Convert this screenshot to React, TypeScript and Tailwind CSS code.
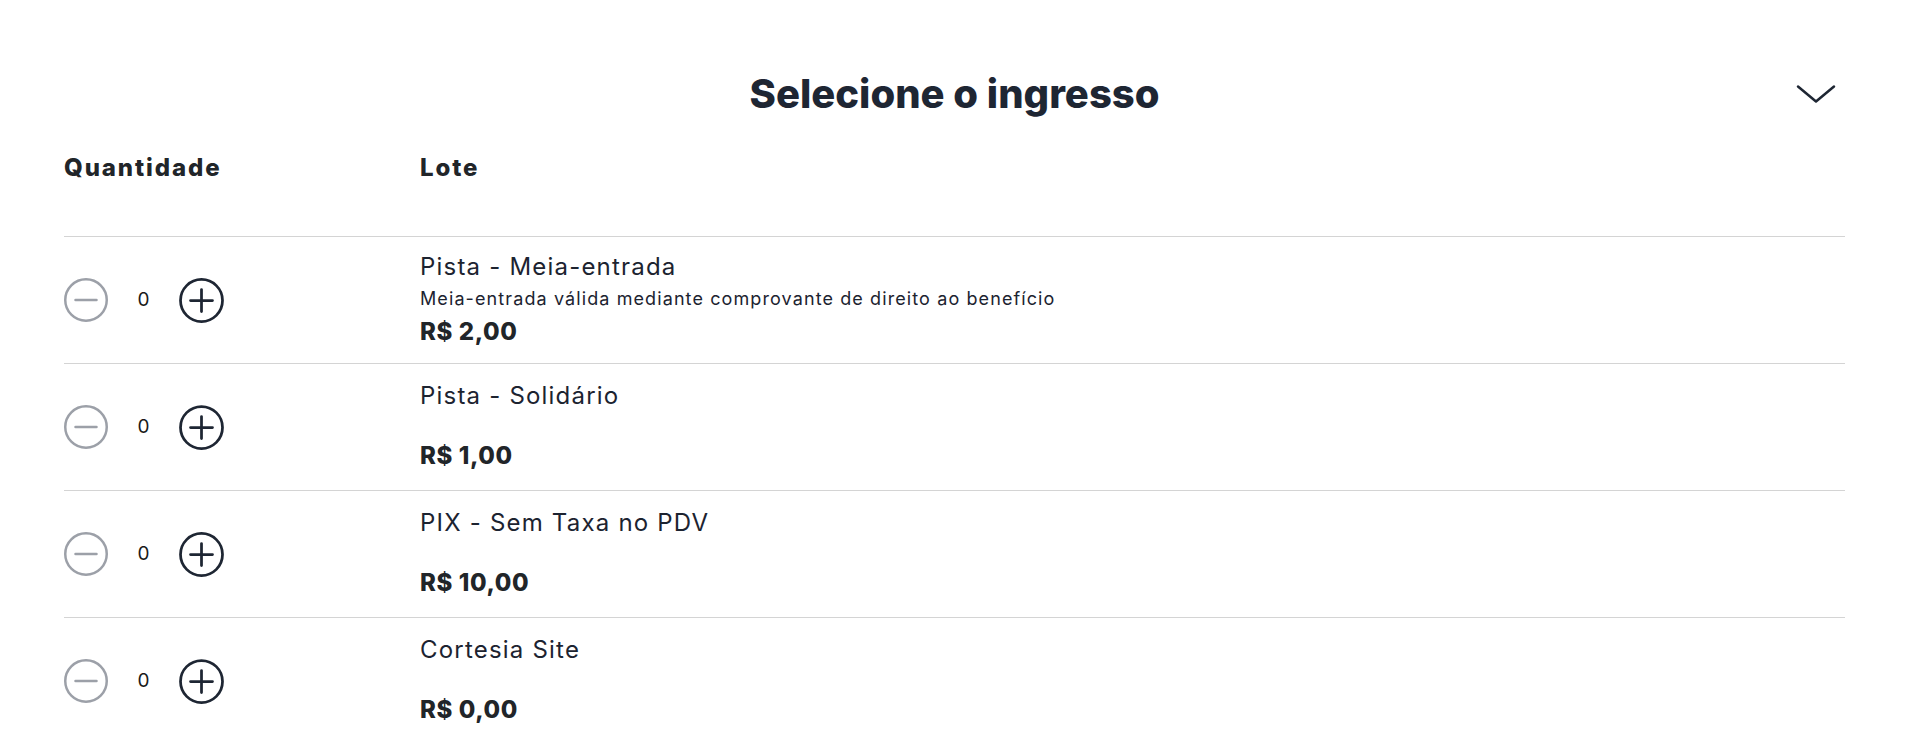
import { useState } from 'react';

type Ticket = {
  id: number;
  name: string;
  description?: string;
  price: string;
};

const tickets: Ticket[] = [
  {
    id: 1,
    name: 'Pista - Meia-entrada',
    description: 'Meia-entrada válida mediante comprovante de direito ao benefício',
    price: 'R$ 2,00',
  },
  { id: 2, name: 'Pista - Solidário', price: 'R$ 1,00' },
  { id: 3, name: 'PIX - Sem Taxa no PDV', price: 'R$ 10,00' },
  { id: 4, name: 'Cortesia Site', price: 'R$ 0,00' },
];

const MinusIcon = ({ active }: { active: boolean }) => (
  <svg width="44" height="44" viewBox="0 0 44 44" fill="none">
    <circle cx="22" cy="22" r="20.75" stroke={active ? '#1e2633' : '#9ca0a8'} strokeWidth="2.5" />
    <path d="M11.5 22h21" stroke={active ? '#1e2633' : '#9ca0a8'} strokeWidth="2.5" strokeLinecap="round" />
  </svg>
);

const PlusIcon = () => (
  <svg width="45" height="45" viewBox="0 0 45 45" fill="none">
    <circle cx="22.5" cy="22.5" r="21" stroke="#1e2633" strokeWidth="2.75" />
    <path d="M11.5 22.5h22M22.5 11.5v22" stroke="#1e2633" strokeWidth="2.75" strokeLinecap="round" />
  </svg>
);

const TicketRow = ({ ticket }: { ticket: Ticket }) => {
  const [qty, setQty] = useState(0);

  return (
    <div className="grid grid-cols-[356px_1fr] h-[127px] border-t border-[#d4d4d4]">
      <div className="flex items-center">
        <button
          className="cursor-pointer"
          onClick={() => setQty(Math.max(0, qty - 1))}
          aria-label="Diminuir"
        >
          <MinusIcon active={qty > 0} />
        </button>
        <span className="w-[71px] text-center text-[19px] text-[#1a1a1a]">{qty}</span>
        <button className="cursor-pointer" onClick={() => setQty(qty + 1)} aria-label="Aumentar">
          <PlusIcon />
        </button>
      </div>

      <div className="flex flex-col justify-center pb-0.5">
        <p className="text-[24px] leading-8 tracking-[1.2px] text-[#1c2330]">{ticket.name}</p>
        {ticket.description ? (
          <p className="mt-1 text-[18px] leading-6 tracking-[1.1px] text-[#1c2330]">{ticket.description}</p>
        ) : (
          <div className="h-[23px]" />
        )}
        <p className="mt-[5px] text-[24px] leading-8 font-extrabold tracking-[0.6px] text-[#212529]">
          {ticket.price}
        </p>
      </div>
    </div>
  );
};

const App = () => {
  const [open, setOpen] = useState(true);

  return (
    <div className="min-h-screen bg-white" style={{ fontFamily: 'Inter, "Noto Sans", sans-serif' }}>
      <div className="pl-16 pr-[75px] pt-[70px]">
        <div className="grid grid-cols-[1fr_auto_1fr] items-center h-12">
          <div />
          <h2 className="text-[40px] leading-[48px] font-extrabold text-[#1e2633]">Selecione o ingresso</h2>
          <button
            className="justify-self-end mr-[9px] cursor-pointer"
            onClick={() => setOpen(!open)}
            aria-label="Alternar"
          >
            <svg width="40" height="20" viewBox="0 0 40 20" fill="none" className={open ? '' : 'rotate-180'}>
              <path d="M2 2.5l18 15 18-15" stroke="#1e2633" strokeWidth="2.5" strokeLinecap="round" strokeLinejoin="round" />
            </svg>
          </button>
        </div>

        <div className="grid grid-cols-[356px_1fr] mt-9 pb-[54px] text-[24px] leading-7 font-extrabold tracking-[1.9px] text-[#212529]">
          <span>Quantidade</span>
          <span>Lote</span>
        </div>

        {open && (
          <div>
            {tickets.map((t) => (
              <TicketRow key={t.id} ticket={t} />
            ))}
          </div>
        )}
      </div>
    </div>
  );
};

export default App;
